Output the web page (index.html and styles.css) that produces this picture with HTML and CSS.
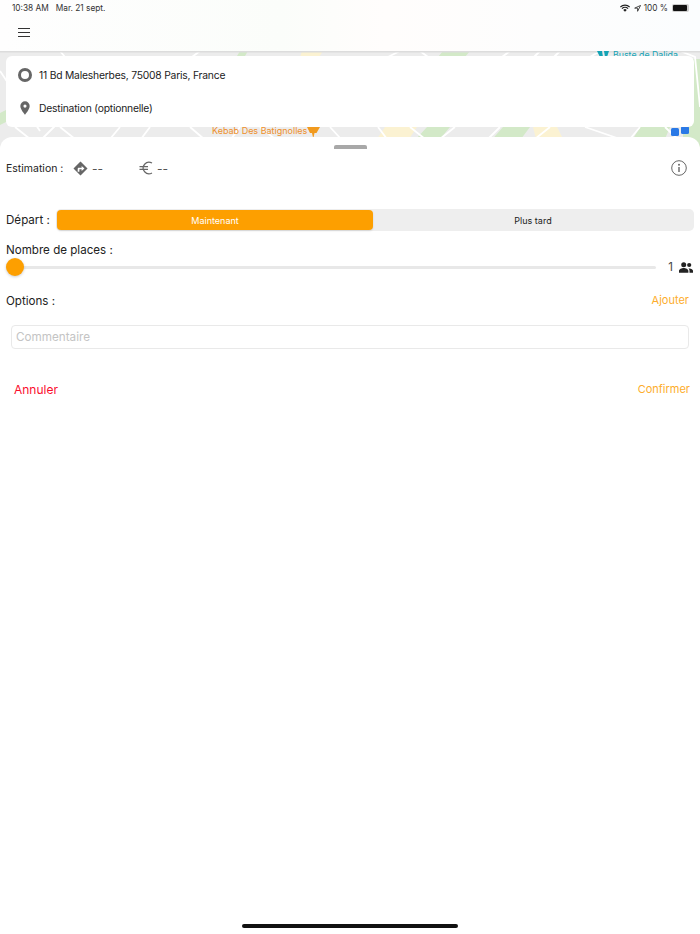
FILE: index.html
```html
<!DOCTYPE html>
<html lang="fr">
<head>
<meta charset="utf-8">
<title>Course</title>
<link rel="stylesheet" href="styles.css">
</head>
<body>
<div class="app">
  <header class="topbar">
    <div class="status">
      <div class="status-left"><span>10:38 AM</span><span>Mar. 21 sept.</span></div>
      <div class="status-right">
        <svg class="wifi" viewBox="0 0 12 9"><path d="M6 9 3.900 6.800a3 3 0 0 1 4.200 0zM2.900 5.800 1.800 4.700a6 6 0 0 1 8.400 0L9.100 5.800a4.400 4.400 0 0 0-6.200 0zM.9 3.800 0 2.800a8.600 8.600 0 0 1 12 0l-.9 1a7.300 7.300 0 0 0-10.200 0z"/></svg>
        <svg class="loc" viewBox="0 0 8 8"><path d="M7.500.5 .8 3.600h3.300v3.600z" fill="none" stroke="#333" stroke-width="1"/></svg>
        <span>100 %</span>
        <span class="battery"><span class="battery-fill"></span></span>
      </div>
    </div>
    <div class="menu"><span></span><span></span><span></span></div>
  </header>

  <section class="map">
    <svg class="map-art" viewBox="0 0 700 100" preserveAspectRatio="none">
      <rect width="700" height="100" fill="#ececec"/>
      <g fill="#d3e9c8">
        <path d="M443 0h27l-5 6h-27zM503 76h27l-18 24h-30zM427 76h23l-20 24h-25zM640 76h30l-10 24h-34zM0 62l8-4v12l-8 4z"/>
        <path d="M683 8h17v92h-17z"/>
        <path d="M240 0h8l-3 5h-8z"/>
      </g>
      <g fill="#fbf2d2">
        <path d="M385 76h32l-16 24h-32zM533 76h24l12 24h-30zM302 0h21l-4 6h-19z"/>
      </g>
      <g stroke="#fff" stroke-width="1.800" fill="none">
        <path d="M0 20 40 80M30 100 70 60M15 76l30 24M60 76l30 24M120 76l-20 24M150 76l-18 24M190 76l28 24M240 76l-18 24M260 76l30 24M330 76l22 24M378 76l18 24M410 76l30 24M455 76l-30 24M500 76l-24 24M520 100l30-24M585 76l70 24M640 76l-20 24M665 76l25 24"/>
        <path d="M60 0 65 6M200 0l-8 6M400 0l-12 6M420 0l8 6M510 0l-8 6M540 0l-6 6M560 0l-6 6M600 0l-10 6M680 0l15 6 5 50"/>
      </g>
      <rect width="700" height="1.500" fill="#dcdcdc"/>
      <circle cx="611" cy="99" r="6" fill="#16a5b8"/>
      <rect x="671" y="77" width="8" height="8" rx="1.500" fill="#2a79e6"/>
      <rect x="681" y="75" width="8" height="8" rx="1.500" fill="#2a79e6"/>
      <path d="M597 0h5l1 6h-3zM604 0h5l-2 6h-2z" fill="#14a3b5"/>
      <path d="M307 76h13l-3.500 6h-2l-1 4.500h-.5l-1-4.500h-2z" fill="#f19a1e"/>
    </svg>
    <span class="poi poi-teal">Buste de Dalida</span>
    <span class="poi poi-orange">Kebab Des Batignolles</span>
    <div class="search-card">
      <div class="search-row">
        <span class="ring"></span>
        <span>11 Bd Malesherbes, 75008 Paris, France</span>
      </div>
      <div class="search-row">
        <svg class="pin" viewBox="0 0 12 16"><path fill-rule="evenodd" d="M6 0a5.600 5.600 0 0 1 5.600 5.600C11.600 9.800 6 16 6 16S.4 9.800.4 5.600A5.600 5.600 0 0 1 6 0zm0 3.800a1.900 1.900 0 1 0 0 3.800 1.900 1.900 0 0 0 0-3.800z"/></svg>
        <span>Destination (optionnelle)</span>
      </div>
    </div>
  </section>

  <main class="sheet">
    <div class="grabber"></div>

    <div class="estimate">
      <div class="estimate-items">
        <span class="label-sm">Estimation :</span>
        <span class="metric metric-distance">
          <svg class="dir" viewBox="0 0 16 16"><path fill-rule="evenodd" d="M8 .5 15.500 8 8 15.500.5 8zM5 11.500V8.300c0-.7.5-1.200 1.200-1.200h3V5.300L12.200 8 9.200 10.700V8.900H6.800v2.600z"/></svg>
          <span>--</span>
        </span>
        <span class="metric">
          <svg class="euro" viewBox="0 0 14 14"><path d="M13 2A5.800 5.800 0 1 0 13 12M.5 5.700h8.500M.5 8.300h8.500" fill="none" stroke="#666" stroke-width="1.200"/></svg>
          <span>--</span>
        </span>
      </div>
      <svg class="info" viewBox="0 0 16 16"><circle cx="8" cy="8" r="7.300" fill="none" stroke="#666" stroke-width="1"/><rect x="7.300" y="7" width="1.400" height="5" fill="#666"/><circle cx="8" cy="4.800" r="1" fill="#666"/></svg>
    </div>

    <div class="depart">
      <span class="label">Départ :</span>
      <div class="segment">
        <button class="seg seg-on">Maintenant</button>
        <button class="seg">Plus tard</button>
      </div>
    </div>

    <div class="places-label label">Nombre de places :</div>
    <div class="places">
      <div class="track"><span class="thumb"></span></div>
      <span class="count">1</span>
      <svg class="people" viewBox="0 0 14 11"><circle cx="4.700" cy="2.700" r="2.500"/><circle cx="10.200" cy="3" r="2.100"/><path d="M0 10.800V9c0-1.900 2.800-2.900 4.700-2.900S9.400 7.100 9.400 9v1.800zM10.500 10.800V8.800c0-.9-.4-1.700-1-2.300 2-.4 4.500.5 4.500 2.300v2z"/></svg>
    </div>

    <div class="options">
      <span class="label">Options :</span>
      <span class="link">Ajouter</span>
    </div>

    <div class="comment">Commentaire</div>

    <div class="actions">
      <span class="cancel">Annuler</span>
      <span class="link confirm">Confirmer</span>
    </div>
  </main>

  <div class="home-indicator"></div>
</div>
</body>
</html>
```
FILE: styles.css
```css
* { box-sizing: border-box; }
html, body { margin: 0; padding: 0; }
body {
  font-family: Inter, "Liberation Sans", sans-serif;
  color: #222;
  background: #fff;
}
.app {
  width: 700px;
  height: 934px;
  position: relative;
  overflow: hidden;
  display: flex;
  flex-direction: column;
}

.topbar {
  height: 51px;
  flex: none;
  padding: 3px 11px 0 12px;
  background: linear-gradient(90deg, #fefefe, #fbfdfa 40%, #fffdfc 55%, #fbfdfe);
}
.status {
  display: flex;
  justify-content: space-between;
  align-items: center;
  height: 10px;
  font-size: 8.300px;
  color: #333;
}
.status-left { display: flex; gap: 7px; }
.status-right { display: flex; align-items: center; gap: 3px; }
.wifi { width: 10px; height: 8px; fill: #222; margin-right: 1px; }
.loc { width: 7px; height: 7px; }
.battery {
  width: 17px;
  height: 8px;
  margin-left: 1px;
  padding: 1px;
  border-radius: 2px;
  background: #ccc;
  display: block;
}
.battery-fill {
  display: block;
  width: 14px;
  height: 6px;
  border-radius: 1px;
  background: #111;
}
.menu {
  width: 12px;
  margin: 15px 0 0 6px;
  display: flex;
  flex-direction: column;
  gap: 2.500px;
}
.menu span { height: 1.300px; background: #333; }

.map {
  height: 100px;
  flex: none;
  position: relative;
  padding: 5px 6px 0;
}
.map-art {
  position: absolute;
  inset: 0;
  width: 100%;
  height: 100%;
}
.poi {
  position: absolute;
  line-height: 12px;
  white-space: nowrap;
}
.poi-teal { left: 613px; top: -2px; font-size: 8.800px; color: #14a3b5; }
.poi-orange { left: 212px; top: 74px; font-size: 9px; color: #ee8f2a; }
.search-card {
  position: relative;
  height: 71px;
  padding: 2px 0 0 12px;
  background: #fff;
  border-radius: 6px;
  display: flex;
  flex-direction: column;
}
.search-row {
  height: 33px;
  display: flex;
  align-items: center;
  gap: 7px;
  font-size: 10.300px;
  letter-spacing: -.2px;
  color: #222;
}
.ring {
  width: 14px;
  height: 14px;
  border: 3px solid #666;
  border-radius: 50%;
  flex: none;
}
.pin {
  width: 10px;
  height: 14px;
  margin: 0 2px;
  fill: #666;
  flex: none;
}

.sheet {
  flex: 1;
  margin-top: -14px;
  position: relative;
  background: #fff;
  border-radius: 12px 12px 0 0;
  padding: 8px 6px 0;
}
.grabber {
  width: 33px;
  height: 4px;
  margin: 0 auto;
  border-radius: 2px 2px 0 0;
  background: #a8a8a8;
}
.estimate {
  height: 22px;
  margin-top: 8px;
  display: flex;
  align-items: center;
  justify-content: space-between;
  padding-right: 7px;
}
.estimate-items { display: flex; align-items: center; }
.label-sm { font-size: 10.500px; color: #222; width: 67px; }
.metric {
  display: flex;
  align-items: center;
  gap: 4px;
  font-size: 12px;
  color: #555;
}
.metric-distance { width: 66px; }
.dir { width: 15px; height: 15px; fill: #666; }
.euro { width: 14px; height: 14px; }
.info { width: 16px; height: 16px; }

.depart {
  display: flex;
  align-items: center;
  margin-top: 30px;
  height: 22px;
}
.label { font-size: 11.600px; color: #222; }
.depart .label { width: 50px; flex: none; }
.segment {
  flex: 1;
  height: 22px;
  padding: 1px;
  display: flex;
  background: #eee;
  border-radius: 5px;
}
.seg {
  flex: 1;
  border: 0;
  padding: 0;
  background: transparent;
  font: inherit;
  font-size: 9px;
  color: #222;
  border-radius: 4px;
}
.seg-on {
  flex: 0 0 316px;
  background: #fd9f00;
  color: #fff;
  box-shadow: 0 1px 2px rgba(0, 0, 0, .12);
}

.places-label { margin-top: 11px; line-height: 16px; }
.places {
  display: flex;
  align-items: center;
  height: 22px;
  margin-top: -2px;
  padding-right: 1px;
}
.track {
  flex: 1;
  height: 3px;
  position: relative;
  background: #e8e8e8;
  border-radius: 2px;
}
.thumb {
  position: absolute;
  left: 0;
  top: -8px;
  width: 18px;
  height: 18px;
  border-radius: 50%;
  background: #fd9f00;
  box-shadow: 0 1px 3px rgba(0, 0, 0, .2);
}
.count { margin-left: 12px; font-size: 11.500px; color: #444; }
.people { width: 14px; height: 11px; margin-left: 6px; fill: #222; }

.options {
  display: flex;
  justify-content: space-between;
  align-items: center;
  height: 20px;
  margin-top: 13px;
  padding-right: 5px;
}
.link { color: #fdad2c; font-size: 11px; }
.options .link { margin-top: -2px; }

.comment {
  height: 24px;
  margin: 14px 5px 0;
  padding-left: 4px;
  display: flex;
  align-items: center;
  font-size: 11.700px;
  color: #c4c4c4;
  border: 1px solid #e9e9e9;
  border-radius: 4px;
}
.actions {
  display: flex;
  justify-content: space-between;
  align-items: center;
  height: 20px;
  margin-top: 30px;
  padding: 0 4px 0 8px;
}
.cancel { color: #fb0d2d; font-size: 12px; }

.home-indicator {
  position: absolute;
  left: 242px;
  bottom: 6px;
  width: 216px;
  height: 4px;
  border-radius: 2px;
  background: #111;
}
```
